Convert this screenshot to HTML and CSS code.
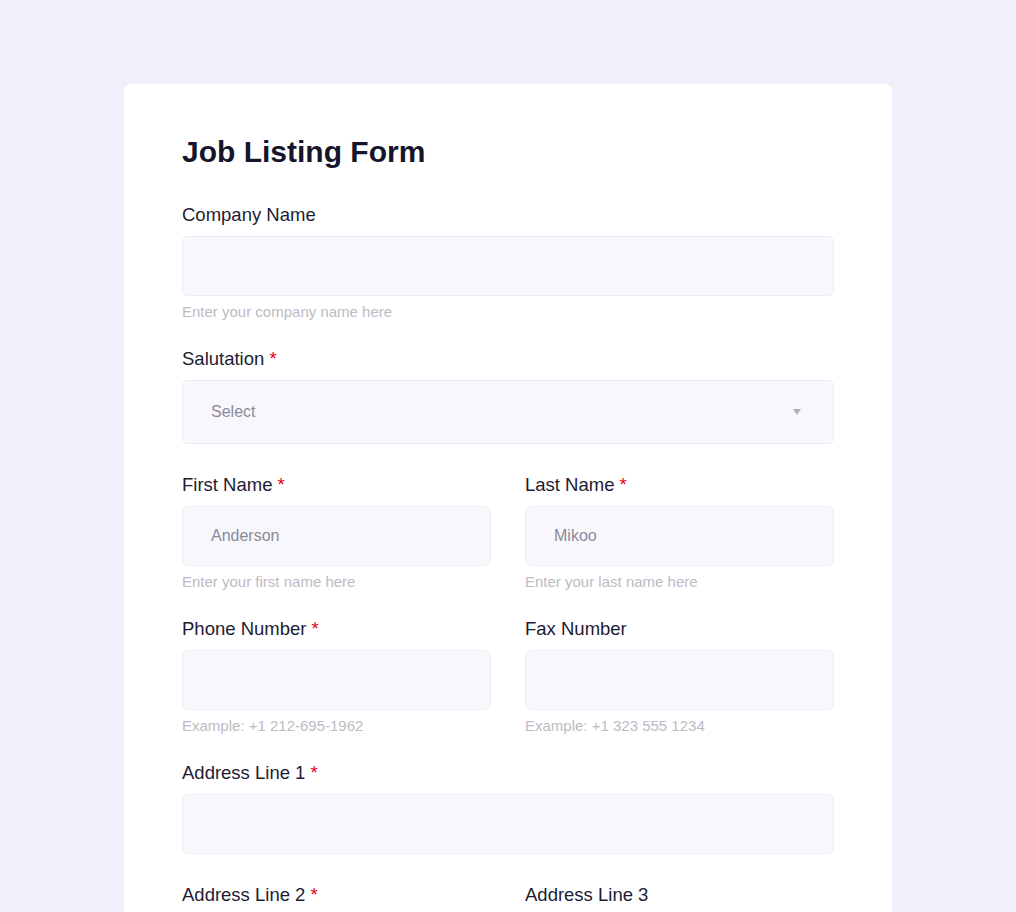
FILE: index.html
```html
<!DOCTYPE html>
<html lang="en">
<head>
<meta charset="utf-8">
<title>Job Listing Form</title>
<link rel="stylesheet" href="styles.css">
</head>
<body>
<main class="card">
  <h1 class="title">Job Listing Form</h1>
  <form class="form">
    <div class="field field--full">
      <label class="label" for="company">Company Name</label>
      <input class="input" id="company" type="text">
      <div class="hint">Enter your company name here</div>
    </div>

    <div class="field field--full field--nohint">
      <label class="label" for="salutation">Salutation <span class="req">*</span></label>
      <div class="select">
        <span class="select__text">Select</span>
        <span class="select__arrow"></span>
      </div>
    </div>

    <div class="field">
      <label class="label" for="first">First Name <span class="req">*</span></label>
      <input class="input" id="first" type="text" placeholder="Anderson">
      <div class="hint">Enter your first name here</div>
    </div>
    <div class="field">
      <label class="label" for="last">Last Name <span class="req">*</span></label>
      <input class="input" id="last" type="text" placeholder="Mikoo">
      <div class="hint">Enter your last name here</div>
    </div>

    <div class="field">
      <label class="label" for="phone">Phone Number <span class="req">*</span></label>
      <input class="input" id="phone" type="text">
      <div class="hint">Example: +1 212-695-1962</div>
    </div>
    <div class="field">
      <label class="label" for="fax">Fax Number</label>
      <input class="input" id="fax" type="text">
      <div class="hint">Example: +1 323 555 1234</div>
    </div>

    <div class="field field--full field--nohint">
      <label class="label" for="addr1">Address Line 1 <span class="req">*</span></label>
      <input class="input" id="addr1" type="text">
    </div>

    <div class="field field--nohint">
      <label class="label" for="addr2">Address Line 2 <span class="req">*</span></label>
      <input class="input" id="addr2" type="text">
    </div>
    <div class="field field--nohint">
      <label class="label" for="addr3">Address Line 3</label>
      <input class="input" id="addr3" type="text">
    </div>
  </form>
</main>
</body>
</html>
```

FILE: styles.css
```css
* {
  box-sizing: border-box;
}

html, body {
  margin: 0;
  padding: 0;
}

body {
  background: #f1f0fa;
  font-family: "Liberation Sans", Arial, sans-serif;
  padding-top: 84px;
}

.card {
  width: 768px;
  margin: 0 auto;
  background: #ffffff;
  border-radius: 6px;
  padding: 50px 58px 60px;
}

.title {
  margin: 0 0 34px;
  font-size: 30px;
  line-height: 36px;
  font-weight: 700;
  color: #16152b;
}

.form {
  display: grid;
  grid-template-columns: 1fr 1fr;
  column-gap: 34px;
  row-gap: 27px;
}

.field {
  display: flex;
  flex-direction: column;
  min-width: 0;
}

.field--full {
  grid-column: 1 / -1;
}

.field--nohint {
  padding-bottom: 3px;
}

.label {
  display: block;
  font-size: 18.5px;
  line-height: 22px;
  color: #1d1c33;
  margin-bottom: 10px;
}

.req {
  color: #e3001b;
}

.input {
  display: block;
  width: 100%;
  height: 60px;
  margin: 0;
  border: 1px solid #ebebf4;
  border-radius: 6px;
  background: #f7f7fc;
  padding: 0 28px;
  font-family: "Liberation Sans", Arial, sans-serif;
  font-size: 16px;
  color: #8b8a99;
  outline: none;
}

.input::placeholder {
  color: #8b8a99;
  opacity: 1;
}

.select {
  position: relative;
  display: flex;
  align-items: center;
  height: 64px;
  border: 1px solid #ebebf4;
  border-radius: 6px;
  background: #f7f7fc;
  padding: 0 28px;
}

.select__text {
  font-size: 16px;
  color: #8b8a99;
}

.select__arrow {
  position: absolute;
  right: 32px;
  top: 50%;
  margin-top: -3px;
  width: 0;
  height: 0;
  border-left: 4.5px solid transparent;
  border-right: 4.5px solid transparent;
  border-top: 6px solid #b0afbb;
}

.hint {
  margin-top: 7px;
  font-size: 15px;
  line-height: 18px;
  color: #bcbbc4;
}
```
